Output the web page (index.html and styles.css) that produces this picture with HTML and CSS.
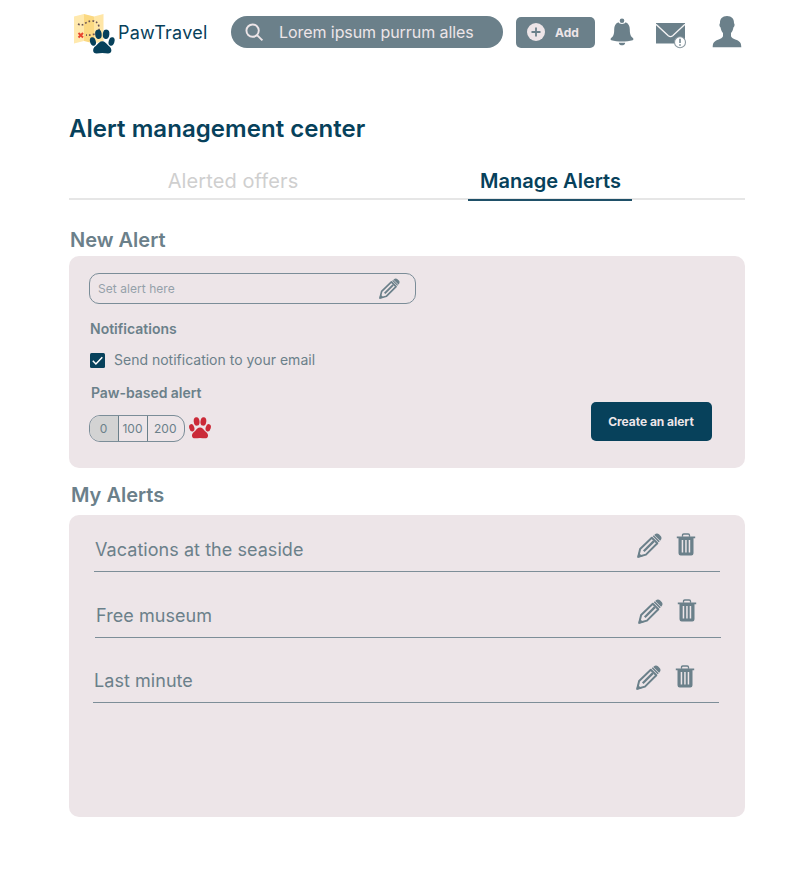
FILE: index.html
```html
<!DOCTYPE html>
<html lang="en">
<head>
<meta charset="utf-8">
<title>PawTravel – Alert management center</title>
<link rel="stylesheet" href="styles.css">
</head>
<body>
<svg class="sprite" aria-hidden="true">
  <symbol id="paw" viewBox="0 0 26 26">
    <ellipse cx="9" cy="5.2" rx="3.400" ry="5" transform="rotate(-6 9 5.2)"/>
    <ellipse cx="17" cy="5.2" rx="3.400" ry="5" transform="rotate(6 17 5.2)"/>
    <ellipse cx="3.300" cy="12.800" rx="3" ry="4.500" transform="rotate(-16 3.3 12.8)"/>
    <ellipse cx="22.700" cy="12.800" rx="3" ry="4.500" transform="rotate(16 22.7 12.8)"/>
    <path d="M13 12.500c2.600 0 3.800 2 5.500 3.800 1.600 1.700 4 3 4 5.600 0 2.300-1.500 3.300-3.500 3.300-1.800 0-4-.5-6-.5s-4.200.5-6 .5c-2 0-3.500-1-3.500-3.300 0-2.600 2.400-3.900 4-5.600 1.700-1.800 2.900-3.800 5.500-3.800z"/>
  </symbol>
  <symbol id="pencil" viewBox="0 0 24 24">
    <path d="M1.200 22.800 3 15.300 14.200 4.500l5.300 5.300L8.600 20.800z" fill="none" stroke="currentColor" stroke-width="1.900" stroke-linejoin="round"/>
    <path d="M6.500 17.500 16.200 7.800" fill="none" stroke="currentColor" stroke-width="2.200"/>
    <path d="M.3 23.700 1.500 18.600 5.400 22.500z"/>
    <path d="m15.600 2.700 5.700 5.700" stroke="currentColor" stroke-width="1.500"/>
    <path d="M17 1.500c1.200-1.200 2.900-1.300 4.100-.2l1.600 1.600c1.200 1.200 1.100 2.900-.1 4.100l-.4.400-5.600-5.500z"/>
  </symbol>
  <symbol id="trash" viewBox="0 0 20 23">
    <path d="M6.500 3.700V2.300Q6.500 1 7.800 1h4.400q1.300 0 1.300 1.300v1.400" fill="none" stroke="currentColor" stroke-width="1.300"/>
    <path fill-rule="evenodd" d="M.8 3.500h18.400v1.800h-1.700v14.900q0 2.200-2.200 2.200H4.700q-2.200 0-2.200-2.200V5.300H.8zM5.700 7v12.500h1.500V7zm3.500 0v12.500h1.500V7zm3.500 0v12.500h1.500V7z"/>
  </symbol>
</svg>

<div class="page">
  <header class="topbar">
    <a class="brand">
      <svg class="brand-mark" viewBox="0 0 44 44">
        <path d="M1 3.500 11 1v27L1 30.500z" fill="#ffe9ae"/>
        <path d="m11 1 10 2.500v27L11 28z" fill="#fbd982"/>
        <path d="m21 3.500 9.500-2.500v27L21 30.500z" fill="#ffe6a6"/>
        <path d="M5 11q4 2 7-.5t6.500-2.500q6-.5 7.500 5.500 1 6-4 7.500T13 22" fill="none" stroke="#6b5555" stroke-width="1.600" stroke-dasharray="1.700 2.100"/>
        <path d="m5.500 20 4.500 4.500m0-4.500-4.500 4.500" stroke="#e8452e" stroke-width="1.900"/>
        <use href="#paw" x="15.500" y="16.200" width="27.500" height="25" fill="#07415b"/>
      </svg>
      <span class="brand-name">PawTravel</span>
    </a>
    <div class="search">
      <svg class="search-icon" viewBox="0 0 20 20"><circle cx="8" cy="8" r="6.500"/><path d="m12.700 12.700 5.600 5.600"/></svg>
      <span>Lorem ipsum purrum alles</span>
    </div>
    <button class="add">
      <svg class="add-icon" viewBox="0 0 18 18"><circle cx="9" cy="9" r="9" fill="#ede5e8"/><path d="M9 4.500v9M4.500 9h9" stroke="#6b808a" stroke-width="1.800"/></svg>
      <span>Add</span>
    </button>
    <svg class="bell" viewBox="0 0 24 28">
      <circle cx="12" cy="2.800" r="2.300"/>
      <path d="M8.500 4.300c.7 2.200 6.300 2.200 7 0 3 1.100 4.300 3.700 4.300 7 0 5.500 1 7.200 3 8.700.8.600.9 1.900-.1 2.300-6 1.700-15.400 1.700-21.400 0-1-.4-.9-1.700-.1-2.300 2-1.500 3-3.200 3-8.700 0-3.300 1.300-5.900 4.300-7z"/>
      <path d="M8.800 24.700h6.400c-.3 3.500-6.100 3.500-6.400 0z"/>
    </svg>
    <svg class="mail" viewBox="0 0 31 27">
      <path d="M0 1h29v20.500H0z"/>
      <path d="m0 2.300 12.300 11.500q2.200 1.800 4.400 0L29 2.300" fill="none" stroke="#f6f4f5" stroke-width="1.300"/>
      <circle cx="24" cy="20.300" r="5.500" fill="#fff" stroke="#8b99a1" stroke-width="1.100"/>
      <path d="M24 16.800v4.200M24 22.300v1.500" stroke="#6b808a" stroke-width="1.500"/>
    </svg>
    <svg class="user" viewBox="0 0 30 32">
      <path d="M15 0c4.700 0 7.200 3 7 7.200.9.400.8 3.200-.6 4.300-.4 2.600-1.200 4.200-2.400 5.500v3.200c.5 1.700 2.300 2.500 5 3.600 4 1.500 5.300 3.200 5.300 7.400H.7c0-4.200 1.300-5.900 5.300-7.400 2.700-1.100 4.500-1.900 5-3.600V17c-1.200-1.300-2-2.900-2.400-5.500C7.200 10.400 7.100 7.600 8 7.200 7.800 3 10.300 0 15 0z"/>
    </svg>
  </header>

  <h1 class="title">Alert management center</h1>
  <nav class="tabs">
    <a class="tab">Alerted offers</a>
    <a class="tab tab-active">Manage Alerts</a>
  </nav>

  <h2 class="section new-title">New Alert</h2>
  <section class="card new-alert">
    <div class="form">
      <div class="field">
        <span>Set alert here</span>
        <svg class="field-pencil"><use href="#pencil"/></svg>
      </div>
      <h3 class="label">Notifications</h3>
      <label class="check">
        <svg class="box" viewBox="0 0 15 15"><rect width="15" height="15" rx="1.500" fill="#07415b"/><path d="m2.800 7.700 3.100 3.200 6.400-6.700" fill="none" stroke="#fff" stroke-width="1.500"/></svg>
        <span>Send notification to your email</span>
      </label>
      <h3 class="label paw-label">Paw-based alert</h3>
      <div class="paws">
        <div class="segments">
          <span class="seg seg-on">0</span>
          <span class="seg">100</span>
          <span class="seg seg-last">200</span>
        </div>
        <svg class="paw-icon"><use href="#paw"/></svg>
      </div>
    </div>
    <button class="create">Create an alert</button>
  </section>

  <h2 class="section my-title">My Alerts</h2>
  <section class="card my-alerts">
    <div class="alert">
      <span class="alert-name">Vacations at the seaside</span>
      <svg class="edit"><use href="#pencil"/></svg>
      <svg class="trash"><use href="#trash"/></svg>
    </div>
    <div class="alert alert-second">
      <span class="alert-name">Free museum</span>
      <svg class="edit"><use href="#pencil"/></svg>
      <svg class="trash"><use href="#trash"/></svg>
    </div>
    <div class="alert alert-third">
      <span class="alert-name">Last minute</span>
      <svg class="edit"><use href="#pencil"/></svg>
      <svg class="trash"><use href="#trash"/></svg>
    </div>
  </section>
</div>
</body>
</html>
```
FILE: styles.css
```css
* { box-sizing: border-box; }
body {
  margin: 0;
  background: #fff;
  color: #6b808a;
  font-family: Inter, "Liberation Sans", sans-serif;
}
svg { display: block; flex: none; fill: currentColor; }
button { border: 0; font: inherit; }
h1, h2, h3 { margin: 0; }
.sprite { display: none; }
.page { width: 676px; margin-left: 69px; height: 884px; }

.topbar { display: flex; align-items: flex-start; height: 64px; padding-top: 13px; }
.brand { display: flex; width: 162px; padding-left: 4px; color: #07415b; }
.brand-mark { width: 44px; height: 44px; }
.brand-name { margin-left: 1px; font-size: 18px; line-height: 40px; letter-spacing: .25px; white-space: nowrap; }
.search {
  display: flex; align-items: center;
  width: 272px; height: 32px; margin-top: 3px; padding-left: 14px;
  border-radius: 16px; background: #6b808a; color: #ede5e8;
  font-size: 16px; letter-spacing: -.07px; white-space: nowrap;
}
.search-icon { width: 19px; height: 19px; margin-right: 15px; fill: none; stroke: currentColor; stroke-width: 2; }
.add {
  display: flex; align-items: center;
  width: 79px; height: 30.500px; margin: 4px 0 0 13px; padding: 0 0 0 11px;
  border-radius: 5px; background: #6b808a; color: #ede5e8;
  font-size: 12px; font-weight: 700;
}
.add-icon { width: 18px; height: 18px; margin-right: 10px; }
.bell { width: 24px; height: 28px; margin: 5px 0 0 14.500px; }
.mail { width: 31px; height: 27px; margin: 9px 0 0 22.500px; }
.user { width: 30px; height: 32px; margin: 3px 0 0 24.500px; }

.title { margin-top: 51px; color: #07415b; font-size: 24px; line-height: 28px; font-weight: 600; letter-spacing: .05px; }
.tabs { display: flex; height: 38px; margin-top: 19px; border-bottom: 2px solid #e6e6e6; }
.tab { width: 164px; height: 38px; margin-left: 82px; color: #cfcfcf; font-size: 20px; line-height: 39px; letter-spacing: .1px; text-align: center; white-space: nowrap; }
.tab-active { height: 39px; margin-left: 153px; padding-left: 1px; border-bottom: 2px solid #1f5068; color: #07415b; font-weight: 600; letter-spacing: 0; }

.section { font-size: 20px; line-height: 24px; font-weight: 600; }
.new-title { margin: 28px 0 4px 1px; }
.my-title { margin: 15px 0 8px 2px; }
.card { border-radius: 10px; background: #ede5e8; }
.new-alert { display: flex; align-items: flex-start; height: 212px; padding: 16.500px 33px 0 20px; }
.form { flex: 1; }
.field {
  display: flex; align-items: center; justify-content: space-between;
  width: 327px; height: 31px; padding: 0 15px 0 8px;
  border: 1px solid #7b8d98; border-radius: 10px;
  color: #95a1aa; font-size: 12px; letter-spacing: .05px;
}
.field-pencil { width: 21px; height: 21px; color: #6b808a; }
.label { margin: 15.500px 0 0 1px; font-size: 14px; line-height: 20px; font-weight: 600; }
.check { display: flex; align-items: center; height: 20px; margin-top: 10px; font-size: 14px; white-space: nowrap; }
.box { width: 15px; height: 15px; margin: 3px 9.500px 0 .5px; }
.paw-label { margin: 14px 0 0 2px; letter-spacing: -.05px; }
.paws { display: flex; align-items: center; margin-top: 12px; }
.segments { display: flex; width: 95.500px; height: 27px; border: 1px solid #7b8d98; border-radius: 11px; overflow: hidden; font-size: 12px; line-height: 26px; text-align: center; }
.seg { width: 29px; padding-right: 1px; border-right: 1px solid #6b808a; }
.seg-on { background: #d3d3d3; }
.seg-last { flex: 1; border: 0; }
.paw-icon { width: 22px; height: 22px; margin: -1px 0 0 4.500px; color: #cb2a38; }
.create { width: 121px; height: 39px; margin-top: 129.500px; padding: 0 1px 0 0; border-radius: 5px; background: #07415b; color: #ede5e8; font-size: 12px; font-weight: 700; letter-spacing: -.04px; }

.my-alerts { height: 302px; padding: 6px 25px 0; }
.alert { display: flex; width: 626px; height: 51px; border-bottom: 1px solid #7d8e98; padding: 12px 24.500px 0 1px; }
.alert + .alert { height: 66px; padding-top: 27px; }
.alert-second { margin-left: 1px; }
.alert + .alert-third { height: 65px; margin-left: -1px; padding-top: 26px; }
.alert-third .edit, .alert-third .trash { margin-top: .5px; }
.alert-name { flex: 1; font-size: 18px; line-height: 33px; letter-spacing: .05px; }
.edit { width: 25px; height: 25px; margin-right: 14px; }
.trash { width: 20px; height: 23px; }
```
